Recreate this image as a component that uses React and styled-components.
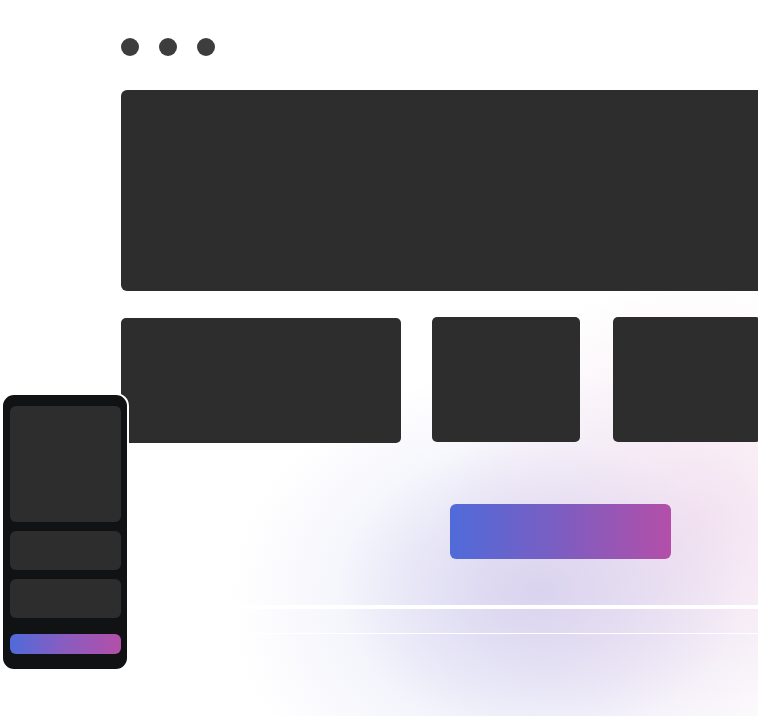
import styled, { createGlobalStyle } from "styled-components";

const GlobalStyle = createGlobalStyle`
  html, body {
    margin: 0;
    padding: 0;
    background: #ffffff;
  }
  body {
    font-family: "Inter", "Liberation Sans", sans-serif;
  }
`;

const App = () => {
  return (
    <>
      <GlobalStyle />
      <Stage>
        <Glow />
        <Desktop>
          <Dots>
            <Dot />
            <Dot />
            <Dot />
          </Dots>
          <Hero />
          <CardRow>
            <Card $offset={1} />
            <Card />
            <Card />
          </CardRow>
          <ActionRow>
            <GradientButton />
          </ActionRow>
        </Desktop>
        <Lines>
          <Line $thick />
          <Line />
        </Lines>

        <Phone>
          <PhoneBlock $tall />
          <PhoneBlock />
          <PhoneBlock />
          <PhoneButton />
        </Phone>
      </Stage>
    </>
  );
};

export default App;

// PAGE
const Stage = styled.div`
  position: relative;
  width: 758px;
  height: 716px;
  overflow: hidden;
  background: #ffffff;
`;

// SOFT GLOW BEHIND THE BUTTON
const Glow = styled.div`
  position: absolute;
  inset: 0;
  pointer-events: none;
  background:
    radial-gradient(
      ellipse 200px 150px at 540px 590px,
      rgba(214, 206, 236, 0.75) 0%,
      rgba(214, 206, 236, 0) 100%
    ),
    radial-gradient(
      ellipse 260px 240px at 700px 520px,
      rgba(240, 214, 234, 0.65) 0%,
      rgba(240, 214, 234, 0) 100%
    ),
    radial-gradient(
      ellipse 290px 230px at 520px 600px,
      rgba(222, 224, 246, 0.8) 0%,
      rgba(222, 224, 246, 0) 100%
    );
`;

// DESKTOP MOCK
const Desktop = styled.div`
  position: relative;
  display: flex;
  flex-direction: column;
  padding: 38px 0 0 121px;
`;

const Dots = styled.div`
  display: flex;
  gap: 20px;
`;

const Dot = styled.span`
  width: 18px;
  height: 18px;
  border-radius: 50%;
  background: #3d3d3d;
`;

const Hero = styled.div`
  margin-top: 34px;
  height: 201px;
  width: 645px;
  border-radius: 6px;
  background: #2d2d2d;
`;

const CardRow = styled.div`
  display: grid;
  grid-template-columns: 280px 148px 150px;
  column-gap: 31px;
  margin-top: 26px;
  & > :nth-child(3) {
    margin-left: 2px;
  }
`;

const Card = styled.div`
  height: 125px;
  border-radius: 5px;
  background: #2d2d2d;
  margin-top: ${(p) => (p.$offset ? `${p.$offset}px` : "0")};
`;

const ActionRow = styled.div`
  display: flex;
  padding-left: 329px;
  margin-top: 61px;
`;

const GradientButton = styled.div`
  width: 221px;
  height: 55px;
  border-radius: 6px;
  background: linear-gradient(90deg, #4f6bd9 0%, #7d5dc1 50%, #b34fa8 100%);
`;

// HORIZONTAL LINES
const Lines = styled.div`
  position: relative;
  display: flex;
  flex-direction: column;
  gap: 24px;
  margin-top: 46px;
`;

const Line = styled.div`
  height: ${(p) => (p.$thick ? "4px" : "1px")};
  background: #ffffff;
`;

// PHONE MOCK (overlays the desktop)
const Phone = styled.div`
  position: absolute;
  left: 1px;
  top: 393px;
  width: 128px;
  height: 278px;
  box-sizing: border-box;
  padding: 11px 6px 15px 7px;
  display: flex;
  flex-direction: column;
  gap: 9px;
  background: #111214;
  border: 2px solid #ffffff;
  border-radius: 13px;
`;

const PhoneBlock = styled.div`
  flex: none;
  height: ${(p) => (p.$tall ? "116px" : "39px")};
  border-radius: 6px;
  background: #2d2d2d;
`;

const PhoneButton = styled.div`
  flex: none;
  margin-top: 7px;
  height: 20px;
  border-radius: 6px;
  background: linear-gradient(90deg, #4f6bd9 0%, #8a5cc0 50%, #b34fa8 100%);
`;
